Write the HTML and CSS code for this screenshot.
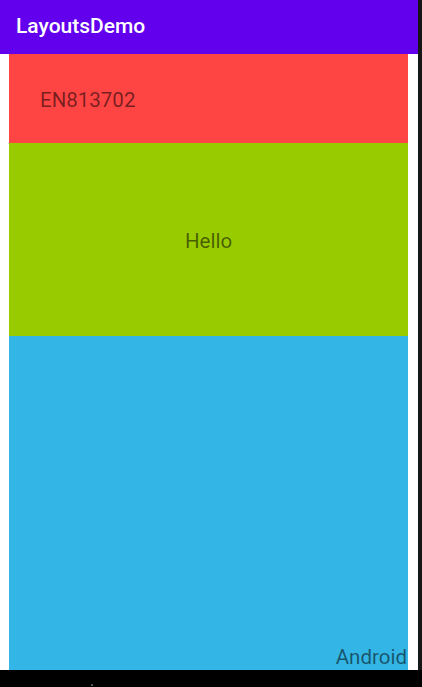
FILE: index.html
```html
<!DOCTYPE html>
<html>
<head>
<meta charset="utf-8">
<link rel="stylesheet" href="styles.css">
</head>
<body>
<div class="screen">
  <div class="main">
    <div class="app">
      <header class="appbar">LayoutsDemo</header>
      <div class="content">
        <div class="block red"><span class="label">EN813702</span></div>
        <div class="block green"><span class="label">Hello</span></div>
        <div class="block blue"><span class="label">Android</span></div>
      </div>
    </div>
    <div class="edge"></div>
  </div>
  <div class="navbar"><span class="dot"></span></div>
</div>
</body>
</html>
```
FILE: styles.css
```css
html, body {
  margin: 0;
  padding: 0;
  background: #000;
}
.screen {
  width: 422px;
  height: 687px;
  display: flex;
  flex-direction: column;
  font-family: Roboto, "Noto Sans", sans-serif;
}
.main {
  display: flex;
  height: 670px;
}
.app {
  width: 418px;
  display: flex;
  flex-direction: column;
  background: #fff;
}
.edge {
  width: 4px;
  background: #161616;
}
.appbar {
  height: 54px;
  background: #6200EE;
  color: #fff;
  font-size: 21px;
  font-weight: 500;
  padding-left: 16px;
  line-height: 53px;
  box-sizing: border-box;
}
.content {
  flex: 1;
  display: flex;
  flex-direction: column;
  padding: 0 10px 0 9px;
}
.block {
  display: flex;
}
.label {
  font-size: 20.5px;
  line-height: 23px;
  color: rgba(0, 0, 0, 0.54);
}
.red {
  background: #FF4444;
  height: 89px;
  box-sizing: border-box;
  padding: 35px 31px 0;
}
.green {
  background: #99CC00;
  height: 193px;
  align-items: center;
  justify-content: center;
}
.green .label {
  margin-top: 3px;
}
.blue {
  background: #33B5E5;
  flex: 1;
  align-items: flex-end;
  justify-content: flex-end;
}
.blue .label {
  margin-bottom: 1px;
  margin-right: 1px;
}
.navbar {
  flex: 1;
  background: #000;
  position: relative;
}
.dot {
  position: absolute;
  left: 91px;
  top: 14px;
  width: 2px;
  height: 2px;
  background: #555;
}
```
